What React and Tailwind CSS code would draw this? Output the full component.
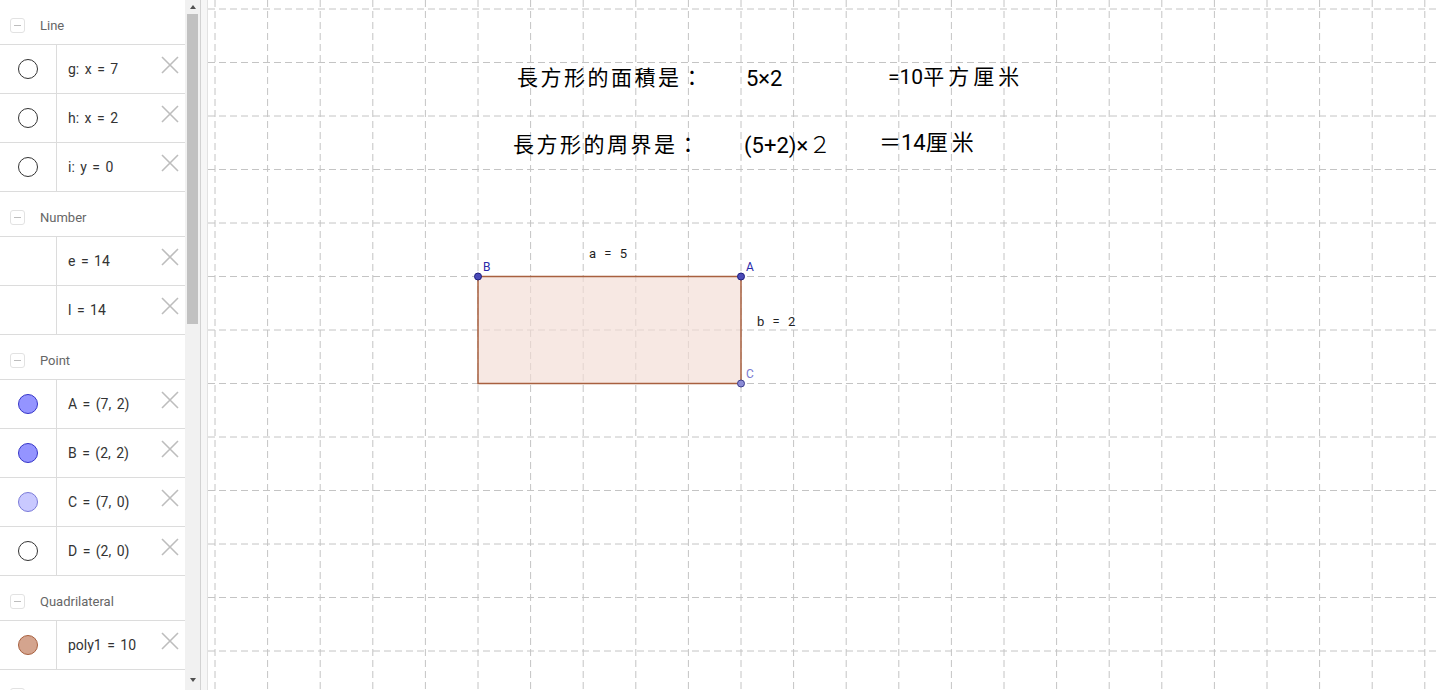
import React from "react";

// --- Data for the algebra panel ---
const sections = [
  {
    title: "Line",
    items: [
      { label: "g: x = 7", dot: "empty" },
      { label: "h: x = 2", dot: "empty" },
      { label: "i: y = 0", dot: "empty" },
    ],
  },
  {
    title: "Number",
    items: [
      { label: "e = 14", dot: null },
      { label: "l = 14", dot: null },
    ],
  },
  {
    title: "Point",
    items: [
      { label: "A = (7, 2)", dot: "blue" },
      { label: "B = (2, 2)", dot: "blue" },
      { label: "C = (7, 0)", dot: "light" },
      { label: "D = (2, 0)", dot: "empty" },
    ],
  },
  {
    title: "Quadrilateral",
    items: [{ label: "poly1 = 10", dot: "poly" }],
  },
  // last group is scrolled out of view, only its toggle peeks in
  { title: "", items: [] },
];

const dotClass = {
  empty: "bg-white border-[1.5px] border-[#333]",
  blue: "bg-[#9494ff] border-[1.5px] border-[#3535c8]",
  light: "bg-[#c9c9ff] border-[1.5px] border-[#7a7ad8]",
  poly: "bg-[#d4a48e] border-[1.5px] border-[#a8603f]",
};

// grid lines of the graphics view (page coordinates)
const vLines = Array.from({ length: 24 }, (_, k) => 215 + 52.6 * k);
const hLines = Array.from({ length: 13 }, (_, k) => 9 + 53.5 * k);

function CloseIcon() {
  return (
    <svg width="18" height="18" viewBox="0 0 18 18" className="shrink-0">
      <path d="M1 1 L17 17 M17 1 L1 17" stroke="#bdbdbd" strokeWidth="1.6" fill="none" />
    </svg>
  );
}

function Header({ title }) {
  return (
    <div className="h-[45px] border-b border-[#dcdcdc] flex items-start pt-[18px] pl-[10px]">
      <div className="w-[15px] h-[15px] rounded-[3px] border border-[#e2e2e2] flex items-center justify-center">
        <div className="w-[7px] h-[1.5px] bg-[#bdbdbd]" />
      </div>
      {title && <span className="ml-[15px] text-[13px] leading-[15px] text-[#666]">{title}</span>}
    </div>
  );
}

function Row({ label, dot }) {
  return (
    <div className="h-[49px] border-b border-[#dcdcdc] flex">
      <div className="w-[57px] border-r border-[#dcdcdc] flex items-center justify-center">
        {dot && <div className={"w-[20px] h-[20px] rounded-full " + dotClass[dot]} />}
      </div>
      <div className="flex-1 flex items-center pl-[11px] text-[14px] text-[#333] [word-spacing:2px]">{label}</div>
      <div className="pt-[11px] pr-[6px]">
        <CloseIcon />
      </div>
    </div>
  );
}

export default function App() {
  return (
    <div className="w-[1440px] h-[690px] flex overflow-hidden bg-white font-['Roboto','Noto_Sans_CJK_TC',sans-serif]">
      {/* --- Algebra panel --- */}
      <div className="w-[185px] h-full overflow-hidden">
        {sections.map((s, i) => (
          <div key={i}>
            <Header title={s.title} />
            {s.items.map((it) => (
              <Row key={it.label} {...it} />
            ))}
          </div>
        ))}
      </div>

      {/* scrollbar */}
      <div className="w-[15px] h-full bg-[#f1f1f1] flex flex-col items-center">
        <div className="mt-[5px] w-0 h-0 border-x-[3.5px] border-x-transparent border-b-[4px] border-b-[#505050]" />
        <div className="mt-[5px] w-[11px] h-[310px] bg-[#c1c1c1]" />
        <div className="mt-auto mb-[8px] w-0 h-0 border-x-[3.5px] border-x-transparent border-t-[4px] border-t-[#505050]" />
      </div>

      {/* splitter */}
      <div className="w-[8px] h-full bg-[#f6f6f6] border-l border-[#d2d2d2] border-r border-r-[#e2e2e2]" />

      {/* --- Graphics view --- */}
      <div className="relative flex-1 h-full bg-white">
        <svg width="1232" height="690" className="absolute inset-0">
          <g transform="translate(-208,0)">
            {vLines.map((x) => (
              <line key={"v" + x} x1={x} y1="0" x2={x} y2="690" stroke="#c4c4c4" strokeWidth="1" strokeDasharray="7 4" />
            ))}
            {hLines.map((y) => (
              <line key={"h" + y} x1="208" y1={y} x2="1440" y2={y} stroke="#c4c4c4" strokeWidth="1" strokeDasharray="7 4" />
            ))}
            <rect x="478" y="276.5" width="263" height="107" fill="#f3dcd4" fillOpacity="0.65" stroke="#a8603f" strokeWidth="1.5" />
            <circle cx="478" cy="276.5" r="3.5" fill="#4a4ab8" stroke="#1f1f80" strokeWidth="1" />
            <circle cx="741" cy="276.5" r="3.5" fill="#4a4ab8" stroke="#1f1f80" strokeWidth="1" />
            <circle cx="741" cy="383.5" r="3.5" fill="#8c8cd6" stroke="#3c3c8c" strokeWidth="1" />
          </g>
        </svg>

        {/* formula texts */}
        <div className="absolute left-[309px] top-[68px] text-[21px] leading-[21px] text-black tracking-[2.5px]">長方形的面積是：</div>
        <div className="absolute left-[538px] top-[68px] text-[22px] leading-[22px] text-black">5×2</div>
        <div className="absolute left-[680px] top-[67px] text-[21px] leading-[21px] text-black whitespace-nowrap">
          =10<span className="tracking-[4px]">平方厘米</span>
        </div>

        <div className="absolute left-[305px] top-[135px] text-[21px] leading-[21px] text-black tracking-[2.5px]">長方形的周界是：</div>
        <div className="absolute left-[536px] top-[135px] text-[22px] leading-[22px] text-black whitespace-nowrap">
          (5+2)×<span className="font-light text-[23px]">２</span>
        </div>
        <div className="absolute left-[671px] top-[132px] text-[22px] leading-[22px] text-black whitespace-nowrap">
          ＝14<span className="tracking-[4px]">厘米</span>
        </div>

        {/* segment labels */}
        <div className="absolute left-[381px] top-[247px] text-[13px] leading-[13px] text-[#222] [word-spacing:5px]">a = 5</div>
        <div className="absolute left-[549px] top-[315px] text-[13px] leading-[13px] text-[#222] [word-spacing:5px]">b = 2</div>

        {/* point labels */}
        <div className="absolute left-[275px] top-[261px] text-[12px] leading-[12px] text-[#2a2aa8]">B</div>
        <div className="absolute left-[538px] top-[261px] text-[12px] leading-[12px] text-[#2a2aa8]">A</div>
        <div className="absolute left-[538px] top-[368px] text-[12px] leading-[12px] text-[#7b7bd0]">C</div>
      </div>
    </div>
  );
}
